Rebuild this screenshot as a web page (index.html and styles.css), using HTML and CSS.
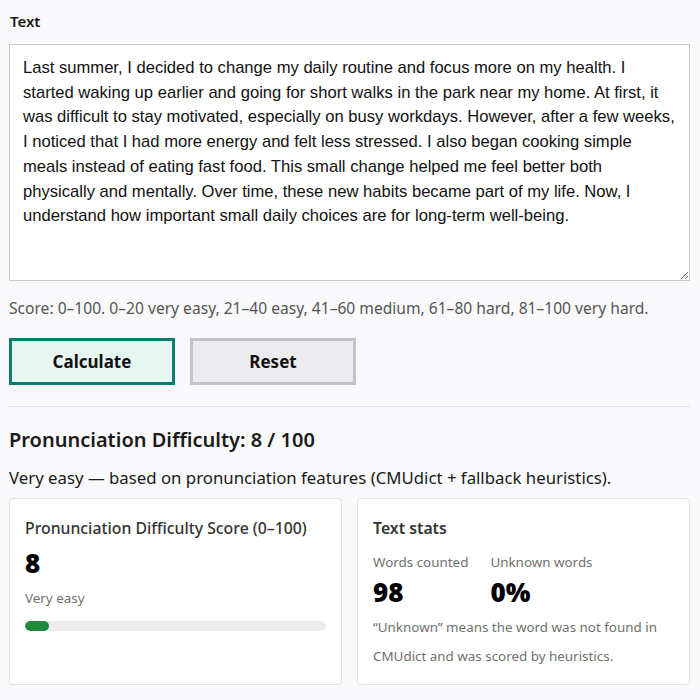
FILE: index.html
```html
<!DOCTYPE html>
<html lang="en">
<head>
<meta charset="utf-8">
<title>Pronunciation Difficulty</title>
<link rel="stylesheet" href="styles.css">
</head>
<body>
<main class="page">
  <label class="field-label" for="txt">Text</label>
  <textarea id="txt" class="text-input">Last summer, I decided to change my daily routine and focus more on my health. I
started waking up earlier and going for short walks in the park near my home. At first, it
was difficult to stay motivated, especially on busy workdays. However, after a few weeks,
I noticed that I had more energy and felt less stressed. I also began cooking simple
meals instead of eating fast food. This small change helped me feel better both
physically and mentally. Over time, these new habits became part of my life. Now, I
understand how important small daily choices are for long-term well-being.</textarea>
  <p class="hint">Score: 0–100. 0–20 very easy, 21–40 easy, 41–60 medium, 61–80 hard, 81–100 very hard.</p>
  <div class="actions">
    <button class="btn btn-primary" type="button">Calculate</button>
    <button class="btn btn-secondary" type="button">Reset</button>
  </div>
  <hr class="divider">
  <h2 class="result-title">Pronunciation Difficulty: 8 / 100</h2>
  <p class="result-sub">Very easy — based on pronunciation features (CMUdict + fallback heuristics).</p>
  <div class="cards">
    <section class="card">
      <h3 class="card-title">Pronunciation Difficulty Score (0–100)</h3>
      <div class="big-num">8</div>
      <div class="muted level">Very easy</div>
      <div class="bar"><div class="bar-fill" style="width:8%"></div></div>
    </section>
    <section class="card">
      <h3 class="card-title card-title-strong">Text stats</h3>
      <div class="stats">
        <div class="stat">
          <div class="muted">Words counted</div>
          <div class="big-num stat-num">98</div>
        </div>
        <div class="stat">
          <div class="muted">Unknown words</div>
          <div class="big-num stat-num">0%</div>
        </div>
      </div>
      <p class="note">“Unknown” means the word was not found in CMUdict and was scored by heuristics.</p>
    </section>
  </div>
</main>
</body>
</html>
```

FILE: styles.css
```css
html, body {
  margin: 0;
  padding: 0;
  background: #f9f9fb;
}
body {
  font-family: "Noto Sans", "Open Sans", sans-serif;
  color: #1a1a1a;
}
.page {
  padding: 10px 10px 0 9px;
  display: flex;
  flex-direction: column;
}
.field-label {
  font-size: 15px;
  font-weight: 600;
  line-height: 22px;
  padding-left: 1px;
  margin-bottom: 12px;
  color: #1a1a1a;
}
.text-input {
  box-sizing: border-box;
  width: 100%;
  height: 237px;
  margin: 0;
  padding: 11px 6px 11px 13px;
  border: 1px solid #c9c9c9;
  border-radius: 0;
  background: #fff;
  font-family: "Liberation Sans", Arial, sans-serif;
  font-size: 16.6px;
  line-height: 24.7px;
  color: #111;
  resize: vertical;
}
.hint {
  margin: 15px 0 0;
  font-size: 15.6px;
  line-height: 24px;
  color: #555;
}
.actions {
  display: flex;
  gap: 15px;
  margin-top: 18px;
}
.btn {
  box-sizing: border-box;
  width: 166px;
  height: 47px;
  font-family: "Noto Sans", "Open Sans", sans-serif;
  font-size: 17px;
  font-weight: 700;
  color: #111;
  cursor: pointer;
}
.btn-primary {
  border: 3px solid #0b7d6a;
  background: #e6f7f2;
}
.btn-secondary {
  border: 3px solid #c4c4c6;
  background: #ececee;
}
.divider {
  width: 100%;
  border: 0;
  border-top: 1px solid #e2e2e4;
  margin: 21px 0 0;
}
.result-title {
  margin: 20px 0 0;
  font-size: 20px;
  font-weight: 600;
  line-height: 26px;
  color: #1a1a1a;
}
.result-sub {
  margin: 13px 0 0;
  font-size: 16.8px;
  line-height: 24px;
  color: #1a1a1a;
}
.cards {
  display: grid;
  grid-template-columns: 1fr 1fr;
  gap: 15px;
  margin-top: 8px;
}
.card {
  box-sizing: border-box;
  height: 187px;
  background: #fff;
  border: 1px solid #e2e2e4;
  border-radius: 4px;
  padding: 17px 15px;
}
.card-title {
  margin: 0;
  font-size: 15.8px;
  font-weight: 500;
  line-height: 24px;
  color: #333;
}
.card-title-strong {
  font-weight: 600;
}
.big-num {
  font-size: 26px;
  font-weight: 900;
  line-height: 32px;
  color: #000;
  margin-top: 7px;
}
.muted {
  font-size: 13.4px;
  line-height: 20px;
  color: #707070;
}
.level {
  margin-top: 9px;
}
.bar {
  margin-top: 13px;
  height: 10px;
  border-radius: 5px;
  background: #ececee;
  overflow: hidden;
}
.bar-fill {
  height: 100%;
  background: #1e8a3a;
  border-radius: 5px;
}
.stats {
  display: flex;
  gap: 22px;
  margin-top: 12px;
}
.stat-num {
  margin-top: 4px;
}
.note {
  margin: 5px 0 0;
  font-size: 13.4px;
  line-height: 29px;
  color: #707070;
}
```
